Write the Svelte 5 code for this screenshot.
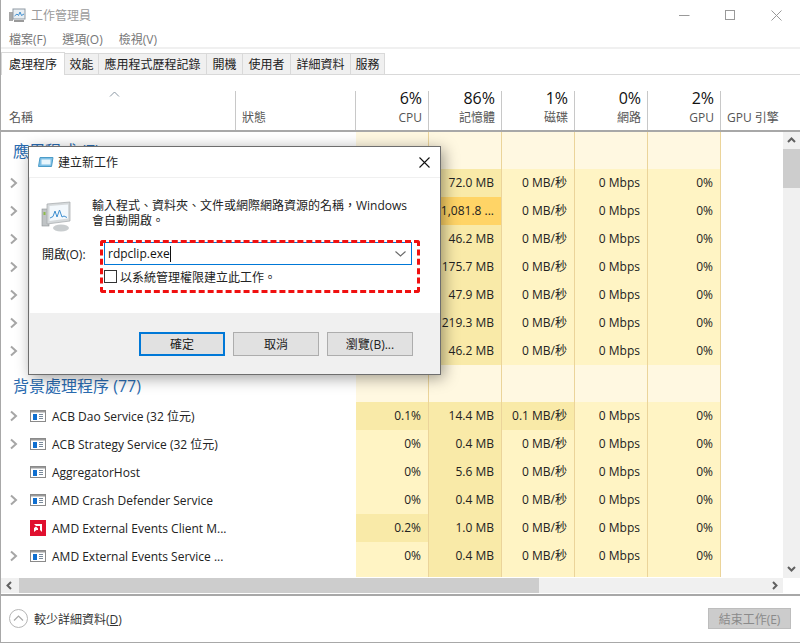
<script>
  const tabs = ['處理程序','效能','應用程式歷程記錄','開機','使用者','詳細資料','服務'];
  const cols = [
    {p:'6%',l:'CPU'},{p:'86%',l:'記憶體'},{p:'1%',l:'磁碟'},{p:'0%',l:'網路'},{p:'2%',l:'GPU'}
  ];
  const fg = [
    {mem:'72.0 MB'},{mem:'1,081.8 ...',hot:true},{mem:'46.2 MB'},{mem:'175.7 MB'},{mem:'47.9 MB'},{mem:'219.3 MB'},{mem:'46.2 MB'}
  ];
  const bg = [
    {n:'ACB Dao Service (32 位元)',c:'0.1%',m:'14.4 MB',d:'0.1 MB/秒',x:1,i:'svc',cw:1,dw:1},
    {n:'ACB Strategy Service (32 位元)',c:'0%',m:'0.4 MB',d:'0 MB/秒',x:1,i:'svc'},
    {n:'AggregatorHost',c:'0%',m:'5.6 MB',d:'0 MB/秒',x:0,i:'svc'},
    {n:'AMD Crash Defender Service',c:'0%',m:'0.4 MB',d:'0 MB/秒',x:1,i:'svc'},
    {n:'AMD External Events Client M...',c:'0.2%',m:'1.0 MB',d:'0 MB/秒',x:0,i:'amd',cw:1},
    {n:'AMD External Events Service ...',c:'0%',m:'0.4 MB',d:'0 MB/秒',x:1,i:'svc'}
  ];
</script>

{#snippet chev()}
  <svg class="chev" width="9" height="12" viewBox="0 0 9 12"><path d="M2 1.5 7 6 2 10.5" fill="none" stroke="#a6a6a6" stroke-width="2"/></svg>
{/snippet}

{#snippet svc()}
  <svg width="16" height="12" viewBox="0 0 16 12">
    <rect x=".5" y=".5" width="15" height="11" fill="#fff" stroke="#8a8a8a"/>
    <rect x="1" y="1" width="14" height="1.5" fill="#9a9a9a"/>
    <rect x="3" y="4" width="4" height="6" fill="#0f6fd0"/>
    <path d="M9 4.5h4M9 6.5h4M9 8.5h4" stroke="#7a8a9a"/>
  </svg>
{/snippet}

{#snippet amd()}
  <svg width="16" height="16" viewBox="0 0 16 16">
    <rect width="16" height="16" fill="#e0102f"/>
    <path d="M4 4h8v8l-2-2V6H6zM4 12V8l2-1.500 2 2V10H6.500z" fill="#fff"/>
  </svg>
{/snippet}

<div class="win">
  <header class="title">
    <svg class="appicon" width="17" height="15" viewBox="0 0 17 15">
      <rect x="0" y="4" width="4" height="9" fill="#a8a8a8"/>
      <rect x="4" y="1" width="12" height="10" fill="#e8eef3" stroke="#8f9aa3"/>
      <path d="M5.500 8 8 6l1.500 1.500L11 4l1.500 3.500L15 6" fill="none" stroke="#3f8fd0"/>
      <rect x="5" y="12" width="10" height="2" fill="#9a9a9a"/>
    </svg>
    <span class="ttext">工作管理員</span>
    <div class="ctrls">
      <svg width="11" height="11" viewBox="0 0 11 11"><path d="M0 5.500h10.500" stroke="#999"/></svg>
      <svg width="11" height="11" viewBox="0 0 11 11"><rect x=".5" y=".5" width="9" height="9" fill="none" stroke="#999"/></svg>
      <svg width="11" height="11" viewBox="0 0 11 11"><path d="M.5.500l10 10M10.500.500l-10 10" stroke="#999"/></svg>
    </div>
  </header>

  <nav class="menu"><span>檔案(F)</span><span>選項(O)</span><span>檢視(V)</span></nav>

  <div class="tabs">
    {#each tabs as t, i}
      <div class="tab" class:active={i === 0}>{t}</div>
    {/each}
  </div>

  <div class="thead">
    <div class="h name">
      <svg class="sort" width="11" height="6" viewBox="0 0 11 6"><path d="M1 5.500 5.500 1 10 5.500" fill="none" stroke="#8a97a3"/></svg>
      <span class="hl">名稱</span>
    </div>
    <div class="h status"><span class="hl">狀態</span></div>
    {#each cols as c}
      <div class="h num"><span class="pct">{c.p}</span><span class="hl">{c.l}</span></div>
    {/each}
    <div class="h eng"><span class="hl">GPU 引擎</span></div>
  </div>

  <div class="body">
    <div class="list">
      <div class="row grp">
        <div class="gname">應用程式 (7)</div>
        <div class="c l"></div><div class="c l"></div><div class="c l"></div><div class="c l"></div><div class="c l"></div>
      </div>
      {#each fg as r}
        <div class="row">
          <div class="nm">{@render chev()}</div>
          <div class="c" class:warm={false}></div>
          <div class="c warm" class:hot={r.hot}>{r.mem}</div>
          <div class="c">0 MB/秒</div>
          <div class="c">0 Mbps</div>
          <div class="c">0%</div>
        </div>
      {/each}
      <div class="row grp">
        <div class="gname">背景處理程序 (77)</div>
        <div class="c l"></div><div class="c l"></div><div class="c l"></div><div class="c l"></div><div class="c l"></div>
      </div>
      {#each bg as r}
        <div class="row">
          <div class="nm">
            <span class="chevbox">{#if r.x}{@render chev()}{/if}</span>
            <span class="ic">{#if r.i === 'svc'}{@render svc()}{:else}{@render amd()}{/if}</span>
            <span class="nt">{r.n}</span>
          </div>
          <div class="c" class:warm={r.cw}>{r.c}</div>
          <div class="c warm">{r.m}</div>
          <div class="c" class:warm={r.dw}>{r.d}</div>
          <div class="c">0 Mbps</div>
          <div class="c">0%</div>
        </div>
      {/each}
      <div class="row tail">
        <div class="nm"></div>
        <div class="c"></div><div class="c warm"></div><div class="c"></div><div class="c"></div><div class="c"></div>
      </div>
    </div>
    <div class="vbar">
      <svg width="9" height="6" viewBox="0 0 9 6"><path d="M1 5 4.500 1.500 8 5" fill="none" stroke="#606060" stroke-width="2"/></svg>
      <div class="vthumb"></div>
      <div class="grow"></div>
      <svg width="9" height="6" viewBox="0 0 9 6"><path d="M1 1 4.500 4.500 8 1" fill="none" stroke="#606060" stroke-width="2"/></svg>
    </div>
  </div>

  <div class="hbar">
    <div class="htrack">
      <svg width="6" height="9" viewBox="0 0 6 9"><path d="M5 1 1.500 4.500 5 8" fill="none" stroke="#606060" stroke-width="2"/></svg>
      <div class="hthumb"></div>
      <svg width="6" height="9" viewBox="0 0 6 9"><path d="M1 1 4.500 4.500 1 8" fill="none" stroke="#606060" stroke-width="2"/></svg>
    </div>
  </div>

  <footer class="foot">
    <svg width="19" height="19" viewBox="0 0 19 19"><circle cx="9.500" cy="9.500" r="9" fill="none" stroke="#b5b5b5"/><path d="M5 11.500 9.500 7l4.500 4.500" fill="none" stroke="#a8a8a8" stroke-width="1.200"/></svg>
    <span class="less">較少詳細資料(<u>D</u>)</span>
    <button class="end">結束工作(E)</button>
  </footer>
</div>

<div class="dlg">
  <div class="dtitle">
    <svg width="16" height="12" viewBox="0 0 16 12">
      <path d="M2 1.500h13l-1.500 9H.500z" fill="#7fc0e6" stroke="#4c9cc8"/>
      <rect x="3.500" y="3.500" width="9" height="5" fill="#e8f5fc"/>
    </svg>
    <span>建立新工作</span>
    <svg class="dx" width="11" height="11" viewBox="0 0 11 11"><path d="M.5.500l10 10M10.500.500l-10 10" stroke="#111" stroke-width="1.100"/></svg>
  </div>
  <div class="dbody">
    <div class="dtop">
      <svg class="dicon" width="32" height="32" viewBox="0 0 32 32">
        <rect x="1" y="8" width="7" height="17" fill="#bfc3c5" stroke="#8d9295" stroke-width=".6"/>
        <rect x="2.500" y="11" width="2" height="3" fill="#8dbb4a"/>
        <path d="M6 3 29 1v19L6 23z" fill="#d5d9db" stroke="#a3a8ab" stroke-width=".7"/>
        <path d="M8.500 5 27 3.500v14L8.500 20z" fill="#f3f8fc"/>
        <path d="M9 17l3-1.500L14 10l2 6 2.500-7 2.500 7 2-1 3 1.500" fill="none" stroke="#3f8fd0" stroke-width="1"/>
        <ellipse cx="20" cy="27" rx="8" ry="3.500" fill="#c9cdcf"/>
      </svg>
      <p>輸入程式、資料夾、文件或網際網路資源的名稱，Windows<br/>會自動開啟。</p>
    </div>
    <div class="field">
      <label for="run">開啟(O):</label>
      <div class="combo">
        <span class="val">rdpclip.exe<i class="caret"></i></span>
        <svg width="11" height="6" viewBox="0 0 11 6"><path d="M.5.500 5.500 5l5-4.500" fill="none" stroke="#6a6a6a" stroke-width="1.100"/></svg>
      </div>
    </div>
    <div class="chk"><span class="box"></span><span>以系統管理權限建立此工作。</span></div>
    <div class="redbox"></div>
  </div>
  <div class="dfoot">
    <button class="b def">確定</button>
    <button class="b">取消</button>
    <button class="b">瀏覽(B)...</button>
  </div>
</div>

<style>
  :global(body) { margin: 0; background: #fff; }
  :global(*) { box-sizing: border-box; }
  .win {
    width: 800px; height: 643px; position: relative; overflow: hidden;
    border-left: 1px solid #a8a8a8; border-bottom: 1px solid #a8a8a8;
    font: 12px "Open Sans", "Noto Sans CJK TC", sans-serif; color: #222;
    display: flex; flex-direction: column; background: #fff;
  }
  .title { height: 30px; display: flex; align-items: center; padding-left: 8px; flex: none; }
  .appicon { margin-right: 5px; }
  .ttext { color: #9a9a9a; }
  .ctrls { margin-left: auto; display: flex; gap: 35px; padding-right: 18px; }
  .menu { height: 19px; display: flex; gap: 16px; padding-left: 8px; align-items: center; color: #777; flex: none; border-bottom: 2px solid #f0f0f0; }
  .tabs { height: 26px; display: flex; align-items: flex-end; flex: none; border-bottom: 1px solid #d9d9d9; padding-bottom: 0; }
  .tab {
    height: 21px; padding: 0 4px; display: flex; align-items: center; justify-content: center;
    background: #f0f0f0; border: 1px solid #d9d9d9; border-left: 0; border-bottom: 0; color: #222;
  }
  .tab.active { height: 23px; background: #fff; width: 64px; border-left: 1px solid #d9d9d9; padding: 0; margin-bottom: -1px; position: relative; }
  .tab:nth-child(2) { width: 34px; }
  .tab:nth-child(3) { width: 108px; }
  .tab:nth-child(4) { width: 36px; }
  .tab:nth-child(5) { width: 48px; }
  .tab:nth-child(6) { width: 60px; }
  .tab:nth-child(7) { width: 34px; }
  .thead { height: 57px; display: flex; flex: none; padding-top: 16px; border-bottom: 2px solid #a8a8a8; }
  .h { position: relative; height: 39px; display: flex; flex-direction: column; justify-content: flex-end; border-right: 1px solid #c8c8c8; flex: none; color: #555; padding-bottom: 4px; }
  .name { width: 235px; padding-left: 8px; }
  .status { width: 120px; padding-left: 6px; }
  .num { width: 73px; align-items: flex-end; padding-right: 6px; padding-bottom: 4px; }
  .eng { width: 63px; padding-left: 6px; border-right: 0; white-space: nowrap; }
  .sort { position: absolute; left: 108px; top: 0; }
  .pct { font-size: 16px; line-height: 20px; color: #111; margin-bottom: 2px; }
  .hl { line-height: 16px; }
  .body { flex: none; height: 446px; display: flex; overflow: hidden; }
  .list { width: 782px; flex: none; }
  .row { display: flex; height: 28px; }
  .row.tail { height: 7px; }
  .row.grp { height: 37px; position: relative; }
  .gname { width: 355px; flex: none; font-size: 16px; color: #2a6bb0; padding: 10px 0 0 12px; line-height: 22px; }
  .row.grp:first-child .gname { padding-top: 8px; }
  .nm { width: 355px; flex: none; display: flex; align-items: center; padding-left: 8px; white-space: nowrap; }
  .chevbox { width: 9px; height: 12px; flex: none; display: flex; }
  .chev { display: block; flex: none; }
  .ic { width: 16px; margin-left: 12px; margin-right: 6px; display: flex; flex: none; }
  .nt { color: #222; }
  .c {
    width: 73px; flex: none; background: #fff4c4; border-right: 1px solid #ebd49a;
    text-align: right; padding-right: 7px; line-height: 28px; white-space: nowrap; color: #222;
  }
  .c.l { background: #fff8e1; }
  .c.warm { background: #f9eaa8; }
  .c.hot { background: #ffd466; }
  .vbar { width: 17px; margin-left: 0; background: #f0f0f0; display: flex; flex-direction: column; align-items: center; padding: 5px 0 6px; }
  .vthumb { width: 17px; height: 39px; background: #cdcdcd; margin-top: 6px; }
  .grow { flex: 1; }
  .hbar { height: 16px; flex: none; border-bottom: 0; display: flex; }
  .htrack { width: 782px; height: 15px; background: #f0f0f0; display: flex; align-items: center; justify-content: space-between; padding: 0 5px; position: relative; }
  .hthumb { position: absolute; left: 18px; top: 0; width: 520px; height: 15px; background: #cdcdcd; }
  .foot { flex: 1; border-top: 2px solid #a8a8a8; display: flex; align-items: center; padding: 0 9px 1px 8px; }
  .less { margin-left: 6px; color: #333; }
  .end { margin-left: auto; width: 83px; height: 21px; font: inherit; color: #8a8a8a; background: #ccc; border: 1px solid #bdbdbd; padding: 0; }

  .dlg {
    position: absolute; left: 28px; top: 146px; width: 413px; height: 229px;
    background: #f0f0f0; border: 1px solid #6e6e6e; box-shadow: 3px 3px 14px rgba(0,0,0,.38);
    font: 12px "Open Sans", "Noto Sans CJK TC", sans-serif; color: #222;
    display: flex; flex-direction: column;
  }
  .dtitle { height: 30px; flex: none; background: #fff; display: flex; align-items: center; padding-left: 9px; gap: 4px; }
  .dtitle span { font-size: 12px; color: #222; letter-spacing: 0; }
  .dx { margin-left: auto; margin-right: 10px; }
  .dbody { flex: none; height: 136px; background: #fff; margin: 0 0 0 1px; position: relative; border-top: 1px solid #f0f0f0; }
  .dtop { display: flex; padding: 20px 0 0 11px; }
  .dicon { margin-top: 3px; flex: none; }
  .dtop p { margin: 0 0 0 19px; line-height: 15px; padding-top: 0; }
  .field { display: flex; align-items: center; margin-top: 9px; padding-left: 12px; }
  label { width: 62px; flex: none; }
  .combo { width: 308px; height: 23px; border: 1px solid #0078d7; display: flex; align-items: center; padding: 0 5px 0 3px; background: #fff; justify-content: space-between; }
  .val { display: flex; align-items: center; color: #111; }
  .caret { display: inline-block; width: 1px; height: 16px; background: #111; }
  .chk { display: flex; align-items: center; margin: 5px 0 0 74px; gap: 3px; height: 13px; color: #222; }
  .box { width: 13px; height: 13px; border: 1px solid #333; flex: none; background: #fff; }
  .redbox { position: absolute; left: 70px; top: 62px; width: 320px; height: 53px; border: 3px dashed #f01010; border-radius: 3px; }
  .dfoot { flex: 1; display: flex; padding: 19px 0 0 110px; gap: 8px; }
  .b { width: 86px; height: 24px; font: inherit; color: #222; background: #e1e1e1; border: 1px solid #adadad; padding: 0; }
  .b.def { border: 2px solid #0078d7; }
</style>
